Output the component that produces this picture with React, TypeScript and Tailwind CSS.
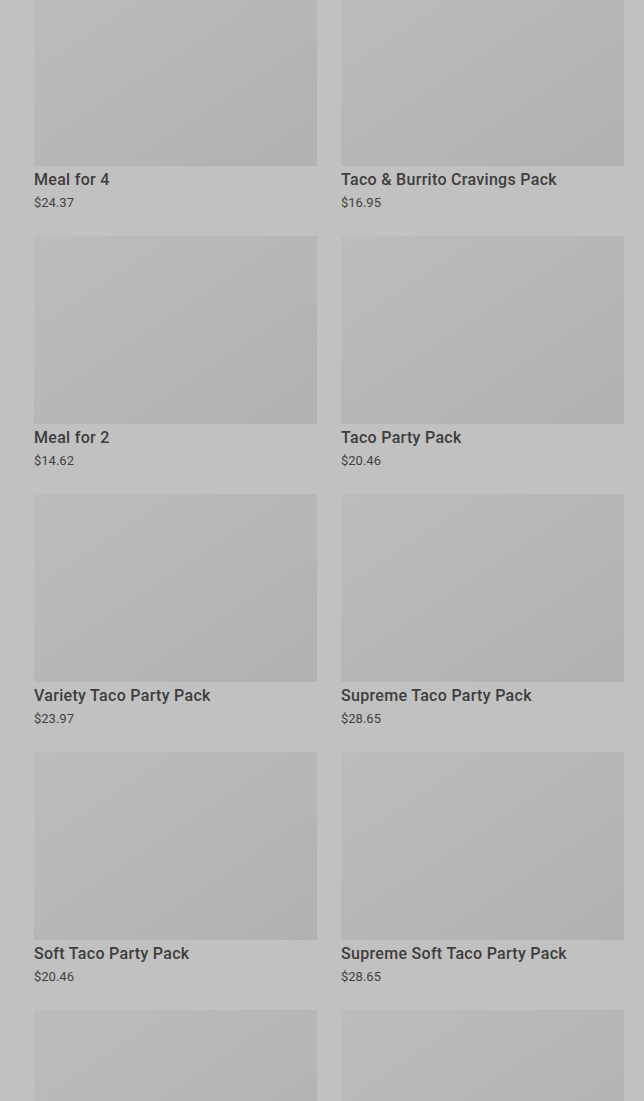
import React from 'react';

const PACKS = [
  { name: 'Meal for 4', price: '$24.37' },
  { name: 'Taco & Burrito Cravings Pack', price: '$16.95' },
  { name: 'Meal for 2', price: '$14.62' },
  { name: 'Taco Party Pack', price: '$20.46' },
  { name: 'Variety Taco Party Pack', price: '$23.97' },
  { name: 'Supreme Taco Party Pack', price: '$28.65' },
  { name: 'Soft Taco Party Pack', price: '$20.46' },
  { name: 'Supreme Soft Taco Party Pack', price: '$28.65' },
];

export default function App() {
  return (
    <div className="h-screen overflow-hidden bg-[#c1c1c1]" style={{ fontFamily: 'Roboto, "Liberation Sans", sans-serif' }}>
      {/* grid of party packs, scrolled a little */}
      <div className="grid grid-cols-2 gap-x-6 gap-y-[25px] pl-[34px] pr-[20px] mt-[-22px]">
        {PACKS.map(p => (
          <div key={p.name} className="flex flex-col">
            <div className="h-[188px] bg-gradient-to-br from-[#bcbcbc] to-[#b1b1b1]" />
            <p className="mt-[4px] text-[16px] leading-5 font-medium tracking-[0.3px] text-[#3d3d3d]">{p.name}</p>
            <p className="mt-[5px] text-[13px] leading-4 text-[#414141]">{p.price}</p>
          </div>
        ))}
        {/* next row, still loading below the fold */}
        <div className="h-[188px] bg-gradient-to-br from-[#bcbcbc] to-[#b1b1b1]" />
        <div className="h-[188px] bg-gradient-to-br from-[#bcbcbc] to-[#b1b1b1]" />
      </div>
    </div>
  );
}
